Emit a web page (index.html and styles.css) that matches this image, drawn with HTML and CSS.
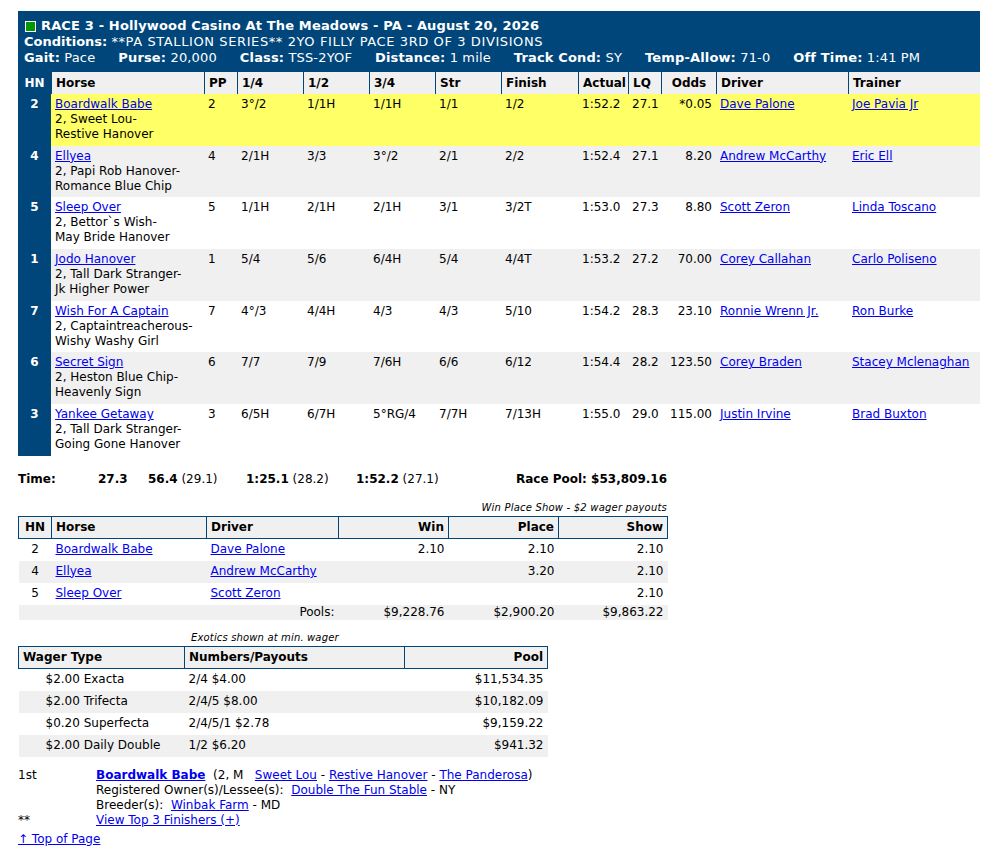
FILE: index.html
```html
<!DOCTYPE html>
<html lang="en">
<head>
<meta charset="utf-8">
<title>Race 3 - Hollywood Casino At The Meadows</title>
<link rel="stylesheet" href="styles.css">
</head>
<body>
<table class="results">
  <colgroup>
    <col class="c-hn"><col class="c-horse"><col class="c-pp"><col class="c-q"><col class="c-q"><col class="c-q"><col class="c-q"><col class="c-fin"><col class="c-act"><col class="c-lq"><col class="c-odds"><col class="c-drv"><col class="c-trn">
  </colgroup>
  <thead>
    <tr>
      <th colspan="13" class="title-cell">
        <div class="race-title"><span class="flag"></span>RACE 3 - Hollywood Casino At The Meadows - PA - August 20, 2026</div>
        <div><b>Conditions:</b> <span class="cond">**PA STALLION SERIES** 2YO FILLY PACE 3RD OF 3 DIVISIONS</span></div>
        <div class="race-info">
          <span><b>Gait:</b> Pace</span>
          <span><b>Purse:</b> 20,000</span>
          <span><b>Class:</b> TSS-2YOF</span>
          <span><b>Distance:</b> 1 mile</span>
          <span><b>Track Cond:</b> SY</span>
          <span><b>Temp-Allow:</b> 71-0</span>
          <span><b>Off Time:</b> 1:41 PM</span>
        </div>
      </th>
    </tr>
    <tr class="head">
      <th class="hn">HN</th><th>Horse</th><th>PP</th><th>1/4</th><th>1/2</th><th>3/4</th><th>Str</th><th>Finish</th><th>Actual</th><th>LQ</th><th class="center">Odds</th><th>Driver</th><th>Trainer</th>
    </tr>
  </thead>
  <tbody>
    <tr class="win">
      <td class="hn">2</td><td><a href="#">Boardwalk Babe</a><br>2, Sweet Lou-<br>Restive Hanover</td><td>2</td><td>3°/2</td><td>1/1H</td><td>1/1H</td><td>1/1</td><td>1/2</td><td>1:52.2</td><td>27.1</td><td class="odds">*0.05</td><td><a href="#">Dave Palone</a></td><td><a href="#">Joe Pavia Jr</a></td>
    </tr>
    <tr class="alt">
      <td class="hn">4</td><td><a href="#">Ellyea</a><br>2, Papi Rob Hanover-<br>Romance Blue Chip</td><td>4</td><td>2/1H</td><td>3/3</td><td>3°/2</td><td>2/1</td><td>2/2</td><td>1:52.4</td><td>27.1</td><td class="odds">8.20</td><td><a href="#">Andrew McCarthy</a></td><td><a href="#">Eric Ell</a></td>
    </tr>
    <tr class="plain">
      <td class="hn">5</td><td><a href="#">Sleep Over</a><br>2, Bettor`s Wish-<br>May Bride Hanover</td><td>5</td><td>1/1H</td><td>2/1H</td><td>2/1H</td><td>3/1</td><td>3/2T</td><td>1:53.0</td><td>27.3</td><td class="odds">8.80</td><td><a href="#">Scott Zeron</a></td><td><a href="#">Linda Toscano</a></td>
    </tr>
    <tr class="alt">
      <td class="hn">1</td><td><a href="#">Jodo Hanover</a><br>2, Tall Dark Stranger-<br>Jk Higher Power</td><td>1</td><td>5/4</td><td>5/6</td><td>6/4H</td><td>5/4</td><td>4/4T</td><td>1:53.2</td><td>27.2</td><td class="odds">70.00</td><td><a href="#">Corey Callahan</a></td><td><a href="#">Carlo Poliseno</a></td>
    </tr>
    <tr class="plain">
      <td class="hn">7</td><td><a href="#">Wish For A Captain</a><br>2, Captaintreacherous-<br>Wishy Washy Girl</td><td>7</td><td>4°/3</td><td>4/4H</td><td>4/3</td><td>4/3</td><td>5/10</td><td>1:54.2</td><td>28.3</td><td class="odds">23.10</td><td><a href="#">Ronnie Wrenn Jr.</a></td><td><a href="#">Ron Burke</a></td>
    </tr>
    <tr class="alt">
      <td class="hn">6</td><td><a href="#">Secret Sign</a><br>2, Heston Blue Chip-<br>Heavenly Sign</td><td>6</td><td>7/7</td><td>7/9</td><td>7/6H</td><td>6/6</td><td>6/12</td><td>1:54.4</td><td>28.2</td><td class="odds">123.50</td><td><a href="#">Corey Braden</a></td><td><a href="#">Stacey Mclenaghan</a></td>
    </tr>
    <tr class="plain">
      <td class="hn">3</td><td><a href="#">Yankee Getaway</a><br>2, Tall Dark Stranger-<br>Going Gone Hanover</td><td>3</td><td>6/5H</td><td>6/7H</td><td>5°RG/4</td><td>7/7H</td><td>7/13H</td><td>1:55.0</td><td>29.0</td><td class="odds">115.00</td><td><a href="#">Justin Irvine</a></td><td><a href="#">Brad Buxton</a></td>
    </tr>
  </tbody>
</table>

<div class="time-row">
  <b>Time:</b>
  <span><b>27.3</b></span>
  <span><b>56.4</b> (29.1)</span>
  <span><b>1:25.1</b> (28.2)</span>
  <span><b>1:52.2</b> (27.1)</span>
  <b>Race Pool: $53,809.16</b>
</div>

<div class="wps-note">Win Place Show - $2 wager payouts</div>
<table class="wps">
  <colgroup><col class="w-hn"><col class="w-horse"><col class="w-drv"><col class="w-num"><col class="w-num"><col class="w-show"></colgroup>
  <thead>
    <tr><th class="center">HN</th><th>Horse</th><th>Driver</th><th class="num">Win</th><th class="num">Place</th><th class="num">Show</th></tr>
  </thead>
  <tbody>
    <tr><td class="center">2</td><td><a href="#">Boardwalk Babe</a></td><td><a href="#">Dave Palone</a></td><td class="num">2.10</td><td class="num">2.10</td><td class="num">2.10</td></tr>
    <tr class="alt"><td class="center">4</td><td><a href="#">Ellyea</a></td><td><a href="#">Andrew McCarthy</a></td><td class="num"></td><td class="num">3.20</td><td class="num">2.10</td></tr>
    <tr><td class="center">5</td><td><a href="#">Sleep Over</a></td><td><a href="#">Scott Zeron</a></td><td class="num"></td><td class="num"></td><td class="num">2.10</td></tr>
    <tr class="alt pools"><td></td><td></td><td class="num pools-label">Pools:</td><td class="num">$9,228.76</td><td class="num">$2,900.20</td><td class="num">$9,863.22</td></tr>
  </tbody>
</table>

<div class="exotic-note">Exotics shown at min. wager</div>
<table class="exotics">
  <colgroup><col class="e-type"><col class="e-pay"><col class="e-pool"></colgroup>
  <thead>
    <tr><th>Wager Type</th><th>Numbers/Payouts</th><th class="num">Pool</th></tr>
  </thead>
  <tbody>
    <tr><td class="wager">$2.00 Exacta</td><td>2/4 $4.00</td><td class="num">$11,534.35</td></tr>
    <tr class="alt"><td class="wager">$2.00 Trifecta</td><td>2/4/5 $8.00</td><td class="num">$10,182.09</td></tr>
    <tr><td class="wager">$0.20 Superfecta</td><td>2/4/5/1 $2.78</td><td class="num">$9,159.22</td></tr>
    <tr class="alt"><td class="wager">$2.00 Daily Double</td><td>1/2 $6.20</td><td class="num">$941.32</td></tr>
  </tbody>
</table>

<div class="finishers">
  <span>1st</span>
  <div>
    <div><a href="#" class="strong-link">Boardwalk Babe</a>&nbsp;&nbsp;(2, M&nbsp;&nbsp;&nbsp;<a href="#">Sweet Lou</a> - <a href="#">Restive Hanover</a> - <a href="#">The Panderosa</a>)</div>
    <div>Registered Owner(s)/Lessee(s):&nbsp;&nbsp;<a href="#">Double The Fun Stable</a> - NY</div>
    <div>Breeder(s):&nbsp;&nbsp;<a href="#">Winbak Farm</a> - MD</div>
  </div>
  <span>**</span>
  <a href="#">View Top 3 Finishers (+)</a>
</div>
<div class="top-link"><a href="#">&uarr; Top of Page</a></div>
</body>
</html>
```

FILE: styles.css
```css
body {
  margin: 0;
  padding: 11px 0 20px 18px;
  font-family: "DejaVu Sans", Verdana, sans-serif;
  font-size: 12px;
  color: #000;
  background: #fff;
}

a {
  color: #0000ee;
  text-decoration: underline;
}

/* ---------- main results table ---------- */
.results {
  width: 962px;
  table-layout: fixed;
  border-collapse: separate;
  border-spacing: 0;
  background: #00467a;
}

.c-hn { width: 33px; }
.c-horse { width: 153px; }
.c-pp { width: 33px; }
.c-q { width: 66px; }
.c-fin { width: 77px; }
.c-act { width: 50px; }
.c-lq { width: 33px; }
.c-odds { width: 55px; }
.c-drv { width: 132px; }
.c-trn { width: 132px; }

.title-cell {
  padding: 7px 6px 6px;
  color: #fff;
  text-align: left;
  font-weight: normal;
  font-size: 13px;
  line-height: 16px;
}

.race-title {
  display: flex;
  align-items: center;
  font-weight: bold;
  letter-spacing: 0.15px;
}

.flag {
  width: 9px;
  height: 9px;
  background: #009a00;
  border: 1px solid #fff;
  margin: 0 5px 0 1px;
}

.cond { letter-spacing: 0.6px; }

.race-info {
  display: flex;
  column-gap: 23px;
  letter-spacing: 0.15px;
}

.head th {
  background: #f0f0f0;
  padding: 4px 4px 3px;
  line-height: 15px;
  text-align: left;
  font-weight: bold;
  border-left: 1px solid #00467a;
}

.head th.hn {
  background: transparent;
  color: #fff;
  text-align: center;
  border-left: 0;
}

.head th.center { text-align: center; }

.results td {
  padding: 3px 4px 3.7px;
  line-height: 15px;
  vertical-align: top;
  white-space: nowrap;
  overflow: hidden;
}

.results td.hn {
  color: #fff;
  font-weight: bold;
  text-align: center;
  background: transparent;
}

.results td.odds { text-align: right; }

.results tr.win td:not(.hn) { background: #ffff66; }
.results tr.alt td:not(.hn) { background: #f0f0f0; }
.results tr.plain td:not(.hn) { background: #fff; }

/* ---------- time row ---------- */
.time-row {
  display: grid;
  grid-template-columns: 80px 50px 98px 110px 1fr auto;
  width: 649px;
  margin-top: 15px;
  line-height: 16px;
}

/* ---------- WPS ---------- */
.wps-note {
  width: 649px;
  text-align: right;
  font-style: italic;
  font-size: 10px;
  letter-spacing: 0.2px;
  line-height: 13px;
  margin-top: 14px;
  margin-bottom: 2px;
}

.wps, .exotics {
  table-layout: fixed;
  border-collapse: collapse;
}

.wps { width: 649px; }

.w-hn { width: 33px; }
.w-horse { width: 155px; }
.w-drv { width: 132px; }
.w-num { width: 110px; }
.w-show { width: 109px; }

.wps th, .exotics th {
  background: #f0f0f0;
  border: 1px solid #00467a;
  padding: 3px 4px;
  line-height: 15px;
  text-align: left;
  font-weight: bold;
}

.wps td {
  padding: 3px 4px 4px;
  line-height: 15px;
  white-space: nowrap;
}

.wps .center { text-align: center; }
.wps .num, .exotics .num { text-align: right; }

.wps tr.alt td, .exotics tr.alt td { background: #f0f0f0; }

.wps tr.pools td {
  padding-top: 0;
  padding-bottom: 0;
  line-height: 15px;
}

/* ---------- exotics ---------- */
.exotic-note {
  font-style: italic;
  font-size: 10px;
  letter-spacing: 0.15px;
  line-height: 13px;
  padding-left: 173px;
  margin-top: 11px;
  margin-bottom: 2px;
}

.exotics { width: 529px; }
.e-type { width: 166px; }
.e-pay { width: 220px; }
.e-pool { width: 143px; }

.exotics td {
  padding: 3px 4px 4px;
  line-height: 15px;
  white-space: nowrap;
}

.exotics td.wager { padding-left: 27px; }

/* ---------- finishers ---------- */
.finishers {
  display: grid;
  grid-template-columns: 78px auto;
  justify-content: start;
  line-height: 15px;
  margin-top: 11px;
}

.finishers > a { justify-self: start; }

.strong-link { font-weight: bold; }

.top-link {
  margin-top: 4px;
  line-height: 15px;
}
```
